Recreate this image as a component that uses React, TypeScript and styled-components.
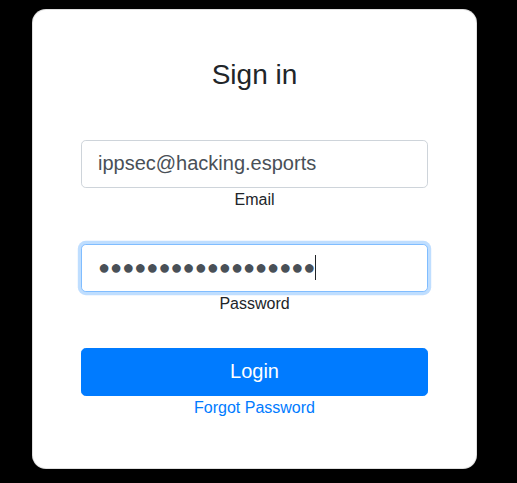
import React from 'react';
import styled, { createGlobalStyle } from 'styled-components';

const GlobalStyle = createGlobalStyle`
  html, body {
    margin: 0;
    padding: 0;
    background: #000;
  }
  body {
    font-family: "Liberation Sans", Arial, sans-serif;
    color: #212529;
  }
  * {
    box-sizing: border-box;
  }
`;

const Page = styled.div`
  min-height: 483px;
  padding: 9px 0 0 32px;
`;

const Card = styled.form`
  width: 445px;
  padding: 48px;
  background: #fff;
  border: 1px solid rgba(0, 0, 0, 0.125);
  border-radius: 14px;
  display: flex;
  flex-direction: column;
  align-items: stretch;
  text-align: center;
`;

const Title = styled.h3`
  margin: 0 0 48px;
  font-size: 28px;
  font-weight: 500;
  line-height: 1.2;
  color: #212529;
`;

const Field = styled.div<{ $gap: number }>`
  display: flex;
  flex-direction: column;
  margin-bottom: ${({ $gap }) => $gap}px;
`;

const InputWrap = styled.div`
  position: relative;
`;

const Input = styled.input<{ $focused?: boolean }>`
  display: block;
  height: 48px;
  width: 100%;
  padding: 8px 16px;
  font-family: "Liberation Sans", Arial, sans-serif;
  font-size: 20px;
  line-height: 1.5;
  color: #495057;
  background: #fff;
  border: 1px solid ${({ $focused }) => ($focused ? '#80bdff' : '#ced4da')};
  border-radius: 4.8px;
  box-shadow: ${({ $focused }) => ($focused ? '0 0 0 3.2px rgba(0, 123, 255, 0.25)' : 'none')};
  outline: none;
  caret-color: transparent;
`;

// text cursor sitting after the last password bullet
const Caret = styled.span`
  position: absolute;
  left: 234px;
  top: 11px;
  width: 1px;
  height: 25px;
  background: #212529;
`;

const Label = styled.label`
  font-size: 16px;
  line-height: 24px;
  color: #212529;
`;

const Button = styled.button`
  height: 48px;
  width: 100%;
  font-family: "Liberation Sans", Arial, sans-serif;
  font-size: 20px;
  color: #fff;
  background: #007bff;
  border: 1px solid #007bff;
  border-radius: 4.8px;
  cursor: pointer;
`;

const Link = styled.a`
  font-size: 16px;
  line-height: 24px;
  color: #007bff;
  text-decoration: none;
`;

const maskedPassword = '\u25CF'.repeat(18);

export default function App() {
  return (
    <>
      <GlobalStyle />
      <Page>
        <Card onSubmit={(e) => e.preventDefault()}>
          <Title>Sign in</Title>
          <Field $gap={32}>
            <Input id="email" type="email" defaultValue="ippsec@hacking.esports" />
            <Label htmlFor="email">Email</Label>
          </Field>
          <Field $gap={32}>
            <InputWrap>
              <Input id="password" type="text" readOnly value={maskedPassword} $focused />
              <Caret />
            </InputWrap>
            <Label htmlFor="password">Password</Label>
          </Field>
          <Button type="submit">Login</Button>
          <Link href="#">Forgot Password</Link>
        </Card>
      </Page>
    </>
  );
}
